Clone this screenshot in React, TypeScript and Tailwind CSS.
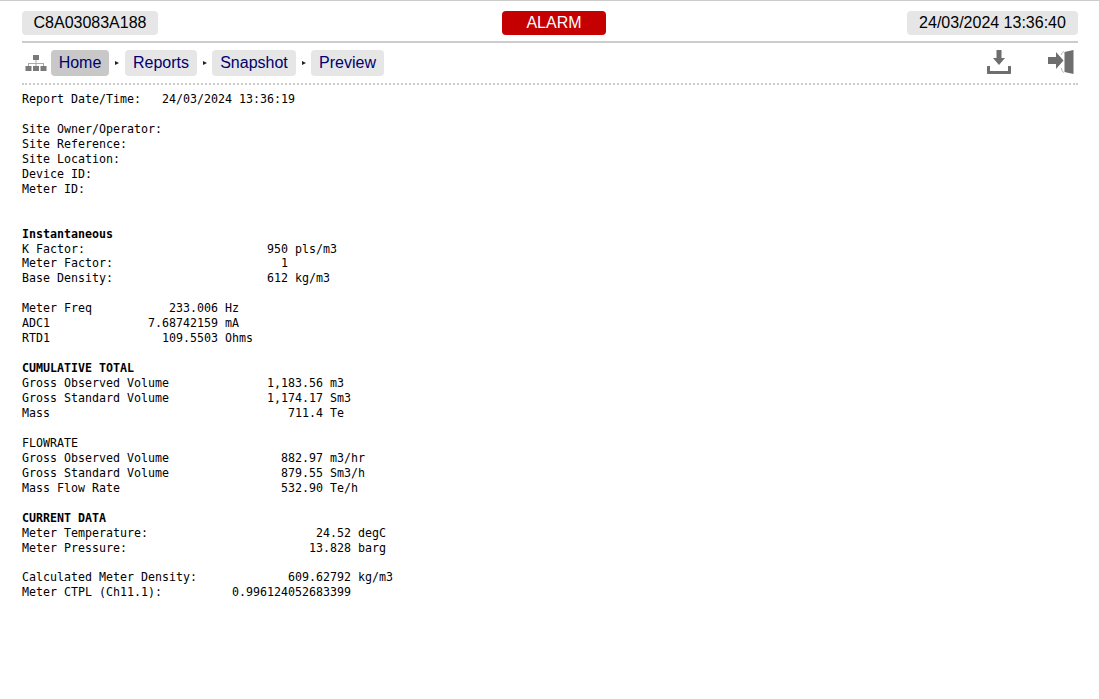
import React from 'react';

// label, then [column, text] pairs placed on a fixed-width grid
function row(label: string, ...cells: [number, string][]) {
  let out = label;
  for (const [col, text] of cells) {
    out = out.padEnd(col, ' ') + text;
  }
  return out;
}

const reportLines: { text: string; bold?: boolean }[] = [
  { text: row('Report Date/Time:', [20, '24/03/2024 13:36:19']) },
  { text: '' },
  { text: 'Site Owner/Operator:' },
  { text: 'Site Reference:' },
  { text: 'Site Location:' },
  { text: 'Device ID:' },
  { text: 'Meter ID:' },
  { text: '' },
  { text: '' },
  { text: 'Instantaneous', bold: true },
  { text: row('K Factor:', [35, '950'], [39, 'pls/m3']) },
  { text: row('Meter Factor:', [37, '1']) },
  { text: row('Base Density:', [35, '612'], [39, 'kg/m3']) },
  { text: '' },
  { text: row('Meter Freq', [21, '233.006'], [29, 'Hz']) },
  { text: row('ADC1', [18, '7.68742159'], [29, 'mA']) },
  { text: row('RTD1', [20, '109.5503'], [29, 'Ohms']) },
  { text: '' },
  { text: 'CUMULATIVE TOTAL', bold: true },
  { text: row('Gross Observed Volume', [35, '1,183.56'], [44, 'm3']) },
  { text: row('Gross Standard Volume', [35, '1,174.17'], [44, 'Sm3']) },
  { text: row('Mass', [38, '711.4'], [44, 'Te']) },
  { text: '' },
  { text: 'FLOWRATE' },
  { text: row('Gross Observed Volume', [37, '882.97'], [44, 'm3/hr']) },
  { text: row('Gross Standard Volume', [37, '879.55'], [44, 'Sm3/h']) },
  { text: row('Mass Flow Rate', [37, '532.90'], [44, 'Te/h']) },
  { text: '' },
  { text: 'CURRENT DATA', bold: true },
  { text: row('Meter Temperature:', [42, '24.52'], [48, 'degC']) },
  { text: row('Meter Pressure:', [41, '13.828'], [48, 'barg']) },
  { text: '' },
  { text: row('Calculated Meter Density:', [38, '609.62792'], [48, 'kg/m3']) },
  { text: row('Meter CTPL (Ch11.1):', [30, '0.996124052683399']) },
];

const crumbs = [
  { label: 'Home', cls: 'w-[58px] bg-[#c8c8c8]', sep: '' },
  { label: 'Reports', cls: 'w-[72px] bg-[#e6e6e6]', sep: 'w-4' },
  { label: 'Snapshot', cls: 'w-[84px] bg-[#e6e6e6]', sep: 'w-[15px]' },
  { label: 'Preview', cls: 'w-[73px] bg-[#e6e6e6]', sep: 'w-[15px]' },
];

function SitemapIcon() {
  return (
    <svg width="22" height="17" viewBox="0 0 22 17" fill="#7a7a7a">
      <rect x="8" y="0" width="6" height="5" />
      <rect x="10.5" y="5" width="1" height="3" fill="#aaaaaa" />
      <rect x="3" y="8" width="16" height="1" fill="#aaaaaa" />
      <rect x="3" y="8" width="1" height="3" fill="#aaaaaa" />
      <rect x="10.5" y="8" width="1" height="3" fill="#aaaaaa" />
      <rect x="18" y="8" width="1" height="3" fill="#aaaaaa" />
      <rect x="0.5" y="11" width="6" height="5" />
      <rect x="8" y="11" width="6" height="5" />
      <rect x="15.5" y="11" width="6" height="5" />
    </svg>
  );
}

function DownloadIcon() {
  return (
    <svg width="24" height="24" viewBox="0 0 24 24" fill="#6e6e6e">
      <path d="M9.5 0h5v8H18l-6 7-6-7h3.5z" />
      <path d="M0 16.5c0-.3.2-.5.5-.5H3v5h18v-5h2.5c.3 0 .5.2.5.5V23c0 .6-.4 1-1 1H1c-.6 0-1-.4-1-1z" />
    </svg>
  );
}

function SignInIcon() {
  return (
    <svg width="26" height="24" viewBox="0 0 26 24" fill="#6e6e6e">
      <path d="M0 7h8V2l7.5 8.5L8 19v-5H0z" />
      <path d="M16.5 2L25.5 0v24l-9-2z" />
      <path d="M16 1.5C14.5 2 13.5 3 13.5 5M16 22.5C14.5 22 13.5 21 13.5 18" fill="none" stroke="#b5b5b5" strokeWidth="1" />
    </svg>
  );
}

export default function App() {
  return (
    <div className="min-h-[699px] bg-white border-t border-[#cccccc] pl-[22px] pt-[10px] pr-[21px] font-['Liberation_Sans',Arial,sans-serif]">
      <header className="flex items-center pb-[6px] border-b-2 border-[#cccccc]">
        <div className="flex-1">
          <div className="h-6 w-[136px] flex items-center justify-center rounded bg-[#e6e6e6] text-base text-black">
            C8A03083A188
          </div>
        </div>
        <div className="h-6 w-[104px] ml-[8px] flex items-center justify-center rounded bg-[#c40000] text-base text-white">
          ALARM
        </div>
        <div className="flex-1 flex justify-end">
          <div className="h-6 w-[171px] flex items-center justify-center rounded bg-[#e6e6e6] text-base text-black">
            24/03/2024 13:36:40
          </div>
        </div>
      </header>

      <nav className="flex items-center justify-between h-[42px] border-b-2 border-dotted border-[#cccccc]">
        <div className="flex items-center pl-[3px]">
          <SitemapIcon />
          <div className="flex items-center ml-[4px]">
            {crumbs.map((c, i) => (
              <React.Fragment key={c.label}>
                {i > 0 && (
                  <span className={`${c.sep} flex justify-center`} aria-hidden>
                    <span className="w-0 h-0 border-y-[2.5px] border-y-transparent border-l-[4px] border-l-[#222222]" />
                  </span>
                )}
                <a className={`${c.cls} h-[26px] flex items-center justify-center rounded text-base text-[#000070]`}>
                  {c.label}
                </a>
              </React.Fragment>
            ))}
          </div>
        </div>
        <div className="flex items-center gap-[37px] pr-[4px] mb-[2px]">
          <DownloadIcon />
          <SignInIcon />
        </div>
      </nav>

      <pre className="mt-[6.98px] font-['DejaVu_Sans_Mono','Liberation_Mono',monospace] text-[11.63px] leading-[14.96px] text-black">
        {reportLines.map((l, i) => (
          <div key={i} className={l.bold ? 'font-bold' : ''}>
            {l.text || ' '}
          </div>
        ))}
      </pre>
    </div>
  );
}
